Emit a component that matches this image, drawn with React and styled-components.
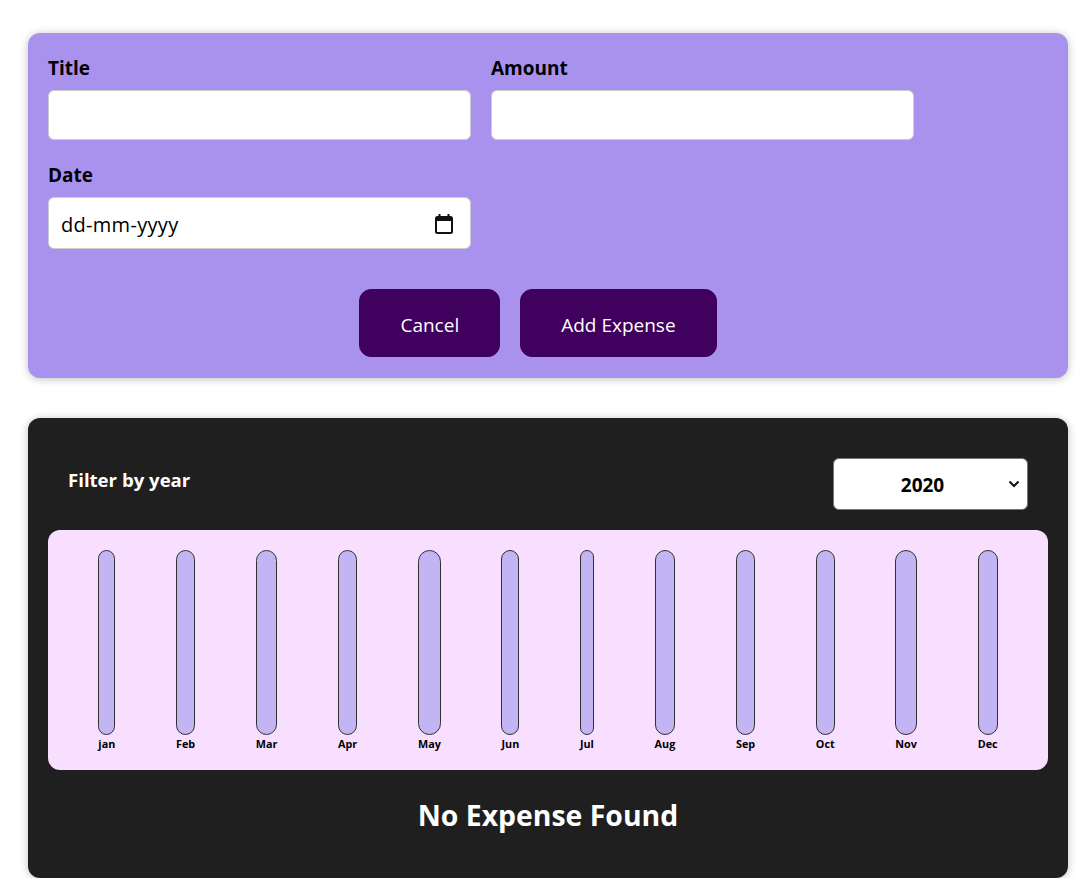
import React from 'react'
import styled, { createGlobalStyle } from 'styled-components'

const GlobalStyle = createGlobalStyle`
  * { box-sizing: border-box; }
  body {
    margin: 0;
    background: #ffffff;
    font-family: "Open Sans", "Noto Sans", sans-serif;
    font-size: 19px;
  }
`

const Page = styled.div`
  width: 1040px;
  margin: 33px 0 0 28px;
`

const NewExpenseCard = styled.div`
  background-color: #a892ee;
  padding: 20px;
  border-radius: 12px;
  box-shadow: 0 1px 8px rgba(0, 0, 0, 0.25);
  height: 345px;
`

const Controls = styled.div`
  display: grid;
  grid-template-columns: 423px 423px;
  column-gap: 20px;
  row-gap: 20px;
`

const Control = styled.div`
  display: flex;
  flex-direction: column;
`

const Label = styled.label`
  font-weight: 700;
  font-size: 19px;
  line-height: 27px;
  padding-top: 2px;
  margin-bottom: 8px;
  color: #000;
`

const TextInput = styled.input`
  font: inherit;
  height: 50px;
  padding: 0 10px;
  border-radius: 6px;
  border: 1px solid #ccc;
  background: #fff;
  width: 100%;
  outline: none;
`

const DateBox = styled.div`
  height: 52px;
  display: flex;
  align-items: center;
  padding: 0 16px 0 12px;
  border-radius: 6px;
  border: 1px solid #ccc;
  background: #fff;
`

const DateInput = styled.input`
  flex: 1;
  font: inherit;
  font-size: 20px;
  border: none;
  outline: none;
  padding: 2px 0 0;
  background: transparent;
  &::placeholder {
    color: #000;
    letter-spacing: 0.3px;
  }
`

const Actions = styled.div`
  text-align: center;
  margin-top: 40px;
`

const Button = styled.button`
  font: inherit;
  font-size: 19px;
  cursor: pointer;
  height: 68px;
  padding: 3px 40px 0;
  border: 1px solid #40005d;
  background-color: #40005d;
  color: #fff;
  border-radius: 12px;
  margin-right: 20px;
`

const ExpensesCard = styled.div`
  margin-top: 40px;
  background-color: #1f1f1f;
  padding: 20px;
  border-radius: 12px;
  box-shadow: 0 1px 8px rgba(0, 0, 0, 0.25);
  height: 460px;
`

const FilterRow = styled.div`
  display: flex;
  align-items: center;
  justify-content: space-between;
  margin: 20px 0;
  padding: 0 20px;
  color: #fff;
`

const FilterLabel = styled.label`
  font-weight: 700;
  font-size: 18.6px;
  margin-top: -9px;
`

const SelectWrap = styled.div`
  position: relative;
  width: 195px;
  height: 52px;
`

const Select = styled.select`
  appearance: none;
  width: 100%;
  height: 100%;
  font: inherit;
  font-size: 19px;
  font-weight: 700;
  color: #000;
  background: #fff;
  border: 1px solid #767676;
  border-radius: 6px;
  padding: 2px 56px 0 40px;
  text-align: center;
  text-align-last: center;
  outline: none;
`

const Chevron = styled.svg`
  position: absolute;
  right: 8px;
  top: 22px;
  pointer-events: none;
`

const Chart = styled.div`
  height: 240px;
  padding: 20px;
  border-radius: 12px;
  background-color: #f8dfff;
  display: flex;
  justify-content: space-around;
`

const Bar = styled.div`
  height: 100%;
  display: flex;
  flex-direction: column;
  align-items: center;
`

const BarInner = styled.div`
  flex: 1;
  width: 100%;
  border: 1px solid #313131;
  border-radius: 12px;
  background-color: #c3b4f3;
`

const BarLabel = styled.div`
  font-weight: 700;
  font-size: 10.8px;
  line-height: 13px;
  padding-top: 2px;
  color: #000;
`

const Fallback = styled.h2`
  color: #fff;
  text-align: center;
  font-size: 28.4px;
  font-weight: 700;
  margin: 26px 0 0;
  line-height: 38px;
`

const months = ['jan', 'Feb', 'Mar', 'Apr', 'May', 'Jun', 'Jul', 'Aug', 'Sep', 'Oct', 'Nov', 'Dec']

const CalendarIcon = () => (
  <svg width="20" height="22" viewBox="0 0 20 22">
    <rect x="2" y="5" width="16" height="16" rx="1.5" fill="none" stroke="#111" strokeWidth="2" />
    <rect x="2" y="5" width="16" height="4" fill="#111" />
    <rect x="4.5" y="2" width="2" height="4" fill="#111" />
    <rect x="13.5" y="2" width="2" height="4" fill="#111" />
  </svg>
)

const App = () => {
  return (
    <Page>
      <GlobalStyle />
      <NewExpenseCard>
        <Controls>
          <Control>
            <Label>Title</Label>
            <TextInput type="text" />
          </Control>
          <Control>
            <Label>Amount</Label>
            <TextInput type="number" />
          </Control>
          <Control>
            <Label>Date</Label>
            <DateBox>
              <DateInput type="text" placeholder="dd-mm-yyyy" />
              <CalendarIcon />
            </DateBox>
          </Control>
        </Controls>
        <Actions>
          <Button type="button">Cancel</Button>
          <Button type="submit">Add Expense</Button>
        </Actions>
      </NewExpenseCard>

      <ExpensesCard>
        <FilterRow>
          <FilterLabel>Filter by year</FilterLabel>
          <SelectWrap>
            <Select defaultValue="2020">
              <option value="2022">2022</option>
              <option value="2021">2021</option>
              <option value="2020">2020</option>
              <option value="2019">2019</option>
            </Select>
            <Chevron width="12" height="8" viewBox="0 0 12 8">
              <path d="M1.5 1.5 L6 6 L10.5 1.5" fill="none" stroke="#111" strokeWidth="2" />
            </Chevron>
          </SelectWrap>
        </FilterRow>
        <Chart>
          {months.map((m) => (
            <Bar key={m}>
              <BarInner />
              <BarLabel>{m}</BarLabel>
            </Bar>
          ))}
        </Chart>
        <Fallback>No Expense Found</Fallback>
      </ExpensesCard>
    </Page>
  )
}

export default App
